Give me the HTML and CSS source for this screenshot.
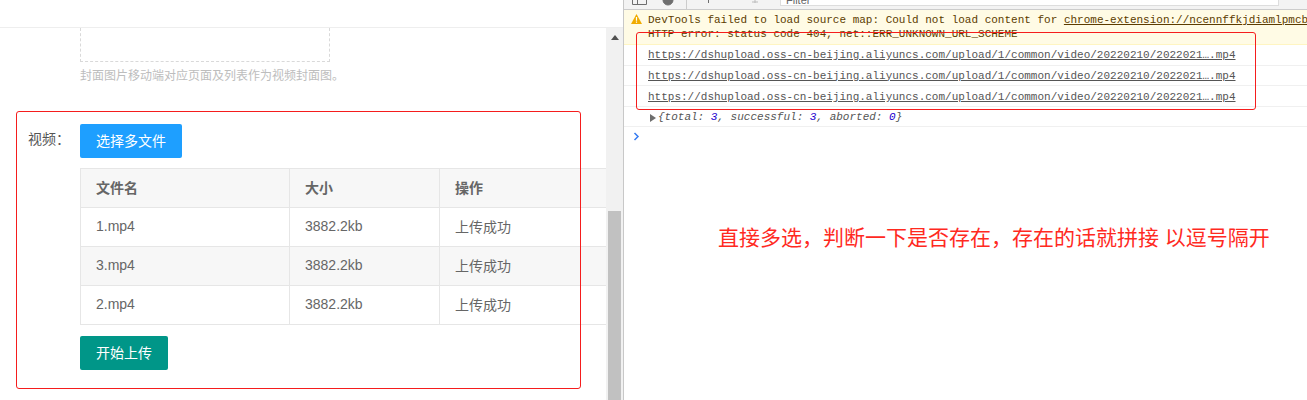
FILE: index.html
```html
<!DOCTYPE html>
<html lang="zh">
<head>
<meta charset="utf-8">
<title>视频上传</title>
<link rel="stylesheet" href="styles.css">
</head>
<body>
<div class="screen">
  <section class="page">
    <div class="page-top"></div>
    <div class="page-body">
      <div class="content">
        <div class="cover-box"></div>
        <p class="hint">封面图片移动端对应页面及列表作为视频封面图。</p>
        <div class="video-row">
          <span class="video-label">视频：</span>
          <div class="video-main">
            <button class="btn btn-blue">选择多文件</button>
            <table class="files">
              <thead><tr><th class="c1">文件名</th><th class="c2">大小</th><th class="c3">操作</th></tr></thead>
              <tbody>
                <tr><td>1.mp4</td><td>3882.2kb</td><td>上传成功</td></tr>
                <tr class="even"><td>3.mp4</td><td>3882.2kb</td><td>上传成功</td></tr>
                <tr><td>2.mp4</td><td>3882.2kb</td><td>上传成功</td></tr>
              </tbody>
            </table>
            <button class="btn btn-green">开始上传</button>
          </div>
        </div>
      </div>
      <div class="scrollbar">
        <svg class="arrow" width="8" height="5" viewBox="0 0 8 5"><path d="M0 5 4 0 8 5z" fill="#505050"/></svg>
        <div class="thumb"></div>
      </div>
    </div>
    <div class="mark mark-video"></div>
  </section>
  <section class="devtools">
    <div class="toolbar">
      <svg class="tool" width="156" height="9" viewBox="0 0 156 9" fill="none" stroke="#6e6e6e"><path d="M8.500 0v4.500h14v-4.500M13.500 0v4.500"/><circle cx="44" cy="0" r="5" fill="#6e6e6e"/><path d="M62.500 0v9" stroke="#ccc"/><path d="M84.500 0v3"/><path d="M128 2h6" stroke="#bbb"/><path d="M131 0v3" stroke="#bbb"/></svg>
      <div class="filter">Filter</div>
      <div class="toolbar-end"></div>
    </div>
    <div class="warn">
      <svg class="warn-icon" width="11" height="10" viewBox="0 0 11 10"><path d="M5.500 0 11 10H0z" fill="#f0ab00"/><path d="M4.900 3h1.200v3.800H4.900zM4.900 7.500h1.200v1.300H4.900z" fill="#fff"/></svg>
      <div class="warn-text">
        <div class="line line-first">DevTools failed to load source map: Could not load content for <u>chrome-extension://ncennffkjdiamlpmcb</u></div>
        <div class="line">HTTP error: status code 404, net::ERR_UNKNOWN_URL_SCHEME</div>
      </div>
    </div>
    <div class="log"><u>https://dshupload.oss-cn-beijing.aliyuncs.com/upload/1/common/video/20220210/2022021….mp4</u></div>
    <div class="log"><u>https://dshupload.oss-cn-beijing.aliyuncs.com/upload/1/common/video/20220210/2022021….mp4</u></div>
    <div class="log log-low"><u>https://dshupload.oss-cn-beijing.aliyuncs.com/upload/1/common/video/20220210/2022021….mp4</u></div>
    <div class="log log-obj">
      <svg class="tri" width="6" height="8" viewBox="0 0 6 8"><path d="M0 0 6 4 0 8z" fill="#6e6e6e"/></svg>
      <i>{total: <b>3</b>, successful: <b>3</b>, aborted: <b>0</b>}</i>
    </div>
    <div class="prompt">
      <svg width="7" height="9" viewBox="0 0 7 9" fill="none" stroke="#367cf1" stroke-width="1.500"><path d="M1.500 1 5 4.500 1.500 8"/></svg>
    </div>
    <p class="note">直接多选，判断一下是否存在，存在的话就拼接 以逗号隔开</p>
    <div class="mark mark-urls"></div>
  </section>
</div>
</body>
</html>
```

FILE: styles.css
```css
* { box-sizing: border-box; }
html, body { margin: 0; padding: 0; background: #fff; }
body { font-family: "Liberation Sans", "Noto Sans CJK SC", sans-serif; }
.screen { display: flex; width: 1307px; height: 400px; overflow: hidden; position: relative; }

/* left page */
.page { width: 623px; height: 400px; flex: none; display: flex; flex-direction: column; }
.page-top { height: 28px; flex: none; border-bottom: 1px solid #eee; }
.page-body { flex: 1; display: flex; min-height: 0; }
.content { width: 606px; flex: none; overflow: hidden; }
.cover-box { width: 250px; height: 34px; margin-left: 80px; border: 1px dashed #d9d9d9; border-top: 0; }
.hint { margin: 4px 0 0 80px; font-size: 12px; line-height: 20px; color: #bdbdbd; white-space: nowrap; }
.video-row { display: flex; margin-top: 38px; }
.video-label { width: 80px; padding: 5px 0 0 28px; font-size: 14px; line-height: 20px; color: #555; flex: none; }
.video-main { display: flex; flex-direction: column; align-items: flex-start; }
.btn { border: 0; border-radius: 2px; height: 34px; padding: 0 16px 2px; font: inherit; font-size: 14px; color: #fff; }
.btn-blue { background: #1e9fff; width: 102px; }
.btn-green { background: #009688; width: 88px; margin-top: 11px; }
.files { margin-top: 10px; border-collapse: collapse; table-layout: fixed; width: 540px; font-size: 14px; color: #666; }
.files th, .files td { height: 39px; padding: 0 15px 2px; border: 1px solid #e6e6e6; text-align: left; font-weight: 400; }
.files th { background: #f7f7f7; font-weight: 700; color: #666; font-size: 14px; }
.files .even td { background: #f7f7f7; }
.c1 { width: 209px; }
.c2 { width: 150px; }
.c3 { width: 181px; }
.scrollbar { width: 17px; flex: none; background: #f1f1f1; display: flex; flex-direction: column; align-items: center; padding-top: 7px; }
.arrow { flex: none; }
.thumb { width: 13px; margin-top: 171px; flex: 1; background: #c1c1c1; }

/* devtools */
.devtools { flex: 1; position: relative; border-left: 1px solid #c8c8c8; min-width: 0; overflow: hidden; }
.toolbar { height: 9px; display: flex; background: #f3f3f3; border-bottom: 1px solid #ccc; box-sizing: content-box; }
.tool { flex: none; }
.filter { width: 499px; height: 6px; background: #fff; border: 1px solid #ddd; border-top: 0; font-size: 11px; line-height: 0; padding-left: 5px; color: #666; overflow: hidden; }
.toolbar-end { flex: 1; }
.warn { display: flex; height: 35px; background: #fffbe5; border-bottom: 1px solid #fff5c2; font-family: "Liberation Mono", monospace; }
.warn-icon { flex: none; margin: 4px 0 0 7px; }
.warn-text { padding: 0 0 0 6px; white-space: nowrap; color: #5c3c00; }
.line { font-size: 11px; height: 14px; line-height: 14px; }
.line-first { margin-top: 3px; }
.log { height: 20.500px; padding: 0 0 0 24px; border-bottom: 1px solid #f0f0f0; font-family: "Liberation Mono", monospace; font-size: 11px; line-height: 21px; color: #555; white-space: nowrap; }
.log-low { padding-top: 1px; }
.log-obj { display: flex; align-items: center; gap: 2px; padding: 3px 0 0 26px; }
.log-obj i b { font-weight: 400; color: #1c00cf; }
.tri { flex: none; }
.prompt { padding: 5px 0 0 9px; line-height: 0; }
.note { position: absolute; left: 94px; top: 225px; margin: 0; font-size: 21px; line-height: 26px; color: #ff2a1f; white-space: nowrap; }

/* red annotations */
.mark { position: absolute; border: 1px solid #f51d1d; border-radius: 3px; pointer-events: none; }
.mark-video { left: 16px; top: 111px; width: 565px; height: 278px; }
.mark-urls { left: 12px; top: 32px; width: 620px; height: 78px; }
```
